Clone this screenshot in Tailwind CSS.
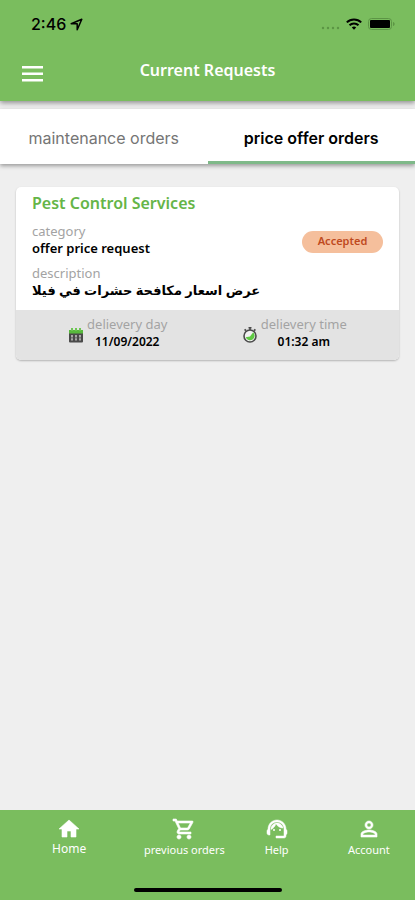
<!DOCTYPE html>
<html lang="en">
<head>
    <meta charset="UTF-8">
    <meta name="viewport" content="width=device-width, initial-scale=1.0">
    <title>Current Requests</title>
    <script src="https://cdn.jsdelivr.net/npm/@tailwindcss/browser@4"></script>
</head>
<body class="min-h-screen flex flex-col bg-[#efefef] font-['Noto_Sans','DejaVu_Sans',sans-serif] text-black">
    <!-- Header -->
    <header class="bg-[#7abd5e] shadow-[0_2px_5px_rgba(0,0,0,0.4)]">
        <!-- Status bar -->
        <div class="h-12 flex justify-between items-center pl-[31px] pr-5">
            <div class="flex items-center gap-1 font-['Inter',sans-serif] text-base font-medium">
                <span>2:46</span>
                <svg class="w-[13px] h-[13px]" viewBox="0 0 13 13" fill="none" stroke="currentColor" stroke-width="1.5" stroke-linejoin="round"><path d="M1.2 5.8 11.8 1.2 7.2 11.8V5.8z"/></svg>
            </div>
            <div class="flex items-center gap-[6px]">
                <svg class="w-[19px] h-3" viewBox="0 0 19 12" fill="#5c9545"><circle cx="2" cy="10" r="1.2"/><circle cx="7" cy="10" r="1.2"/><circle cx="12" cy="10" r="1.2"/><circle cx="17" cy="10" r="1.2"/></svg>
                <svg class="w-4 h-3" viewBox="0 0 16 12" fill="none" stroke="currentColor" stroke-width="2"><path d="M.8 4.4a10.2 10.2 0 0 1 14.4 0M3.5 7.3a6.3 6.3 0 0 1 9 0"/><path d="M8 11.8 5.8 9.6a3.1 3.1 0 0 1 4.4 0z" fill="currentColor" stroke="none"/></svg>
                <svg class="w-[27px] h-3" viewBox="0 0 27 12"><rect x=".5" y=".5" width="23" height="11" rx="3" fill="none" stroke="#5c9545"/><rect x="2" y="2" width="20" height="8" rx="1" fill="#000"/><path d="M25 4v4c1-.4 1.7-1.2 1.7-2S26 4.4 25 4z" fill="#5c9545"/></svg>
            </div>
        </div>
        <div class="h-[53px] grid grid-cols-[1fr_auto_1fr] items-start px-[22px]">
            <button type="button" aria-label="Menu" class="w-[21px] mt-[18px] text-white">
                <svg class="w-[21px] h-4" viewBox="0 0 21 16" fill="currentColor"><path d="M0 0h21v2.5H0zM0 6.5h21V9H0zM0 13h21v2.5H0z"/></svg>
            </button>
            <h1 class="mt-[10px] text-base leading-6 font-semibold text-white">Current Requests</h1>
        </div>
    </header>

    <!-- Tabs -->
    <nav class="mt-2 grid grid-cols-2 bg-white font-['Inter',sans-serif] text-base leading-6 shadow-[0_2px_4px_rgba(0,0,0,0.35)]">
        <a href="#" class="h-[55px] flex items-center justify-center pt-[5px] border-b-3 border-transparent text-[#757575]">maintenance orders</a>
        <a href="#" aria-current="page" class="h-[55px] flex items-center justify-center pt-[5px] border-b-3 border-[#7fb989] font-semibold">price offer orders</a>
    </nav>

    <!-- Requests -->
    <main class="flex-1 px-4 pt-[23px]">
        <article class="rounded-[5px] overflow-hidden bg-white shadow-[0_1px_2px_rgba(0,0,0,0.25)]">
            <div class="h-[123px] px-4 pt-1">
                <h2 class="text-base leading-6 font-semibold text-[#65b548]">Pest Control Services</h2>
                <div class="mt-2 flex justify-between items-start text-[13px] leading-[17px]">
                    <div>
                        <p class="text-[#a3a3a3]">category</p>
                        <p class="font-semibold">offer price request</p>
                    </div>
                    <span class="w-[81px] mt-2 rounded-full bg-[#f5bf9c] pt-[3px] pb-[5px] text-center text-[11px] leading-[14px] font-semibold text-[#bf4a1f]">Accepted</span>
                </div>
                <div class="mt-2 text-[13px] leading-[17px]">
                    <p class="text-[#a3a3a3]">description</p>
                    <p lang="ar" dir="rtl" class="w-fit font-bold">عرض اسعار مكافحة حشرات في فيلا</p>
                </div>
            </div>
            <div class="h-[50px] grid grid-cols-2 pl-[14px] pr-4 pt-[6px] bg-[#e3e3e3] text-[13px] leading-[17px] text-center">
                <div class="flex justify-center gap-1">
                    <svg class="w-[14px] h-[15px] mt-3" viewBox="0 0 14 15"><path d="M0 5h14v8.500a1 1 0 0 1-1 1H1a1 1 0 0 1-1-1z" fill="#4a4a4a"/><path d="M0 2h14v3.500H0z" fill="#58b93d"/><path d="M2 0h2v3H2zM6 0h2v3H6zM10 0h2v3h-2z" fill="#6cc653"/><path d="M2 7h2v5.500H2zM6 7h2v5.500H6zM10 7h2v5.500h-2z" fill="#a8a8a8"/><path d="M1 9.400h12v.8H1z" fill="#4a4a4a"/></svg>
                    <div>
                        <p class="text-[#a3a3a3]">delievery day</p>
                        <p class="text-xs leading-[17px] font-semibold">11/09/2022</p>
                    </div>
                </div>
                <div class="flex justify-center gap-1">
                    <svg class="w-[14px] h-4 mt-[11px]" viewBox="0 0 14 16"><circle cx="7" cy="9" r="6" fill="#f1f1f1" stroke="#4b4b4b" stroke-width="1.6"/><path d="M5.500 0h3v1.500H7.800V3H6.200V1.500h-.7zM1 3l1.200-1.200L3.600 3 2.400 4.200zM13 3l-1.200-1.200L10.400 3l1.200 1.200z" fill="#4b4b4b"/><path d="M7 9.500 10.200 5.300A4.600 4.600 0 1 1 2.700 10.200z" fill="#5fca43"/></svg>
                    <div>
                        <p class="text-[#a3a3a3]">delievery time</p>
                        <p class="text-xs leading-[17px] font-semibold">01:32 am</p>
                    </div>
                </div>
            </div>
        </article>
    </main>

    <!-- Bottom navigation -->
    <footer class="bg-[#7abd5e] text-white">
        <nav class="h-[78px] flex pt-[7px] text-[11px] leading-4 text-center">
            <a href="#" class="flex-[3] flex flex-col items-center text-xs leading-4">
                <svg class="w-6 h-6" viewBox="0 0 24 24" fill="currentColor" stroke="currentColor" stroke-width=".6"><path d="M10 20v-6h4v6h5v-8h3L12 3 2 12h3v8z"/></svg>
                Home
            </a>
            <a href="#" class="flex-[2] flex flex-col items-center gap-px whitespace-nowrap">
                <svg class="w-6 h-6" viewBox="0 0 24 24" fill="currentColor" stroke="currentColor" stroke-width=".6"><path d="M15.55 13c.75 0 1.41-.41 1.75-1.03l3.58-6.49A.996.996 0 0 0 20.01 4H5.21l-.94-2H1v2h2l3.6 7.59-1.35 2.44C4.52 15.37 5.48 17 7 17h12v-2H7l1.1-2h7.45zM6.16 6h12.15l-2.76 5H8.53L6.16 6zM7 18c-1.1 0-1.99.9-1.99 2S5.9 22 7 22s2-.9 2-2-.9-2-2-2zm10 0c-1.1 0-1.99.9-1.99 2s.89 2 1.99 2 2-.9 2-2-.9-2-2-2z"/></svg>
                previous orders
            </a>
            <a href="#" class="flex-[2] flex flex-col items-center gap-px">
                <svg class="w-6 h-6" viewBox="0 0 24 24" fill="currentColor" stroke="currentColor" stroke-width=".5"><path d="M21 12.22C21 6.73 16.74 3 12 3c-4.69 0-9 3.65-9 9.28-.6.34-1 .98-1 1.72v2c0 1.1.9 2 2 2h1v-6.1c0-3.87 3.13-7 7-7s7 3.13 7 7V19h-8v2h8c1.1 0 2-.9 2-2v-1.22c.59-.31 1-.92 1-1.64v-2.3c0-.7-.41-1.31-1-1.62z"/><circle cx="9" cy="13" r="1" stroke="none"/><circle cx="15" cy="13" r="1" stroke="none"/><path d="M18 11.03C17.52 8.18 15.04 6 12.05 6c-3.03 0-6.29 2.51-6.03 6.45 2.47-1.01 4.33-3.21 4.86-5.89 1.31 2.63 4 4.44 7.12 4.47z"/></svg>
                Help
            </a>
            <a href="#" class="flex-[2] flex flex-col items-center gap-px">
                <svg class="w-6 h-6" viewBox="0 0 24 24" fill="currentColor" stroke="currentColor" stroke-width=".6"><path d="M12 5.9a2.1 2.1 0 1 1 0 4.2 2.1 2.1 0 0 1 0-4.2m0 9c2.97 0 6.1 1.46 6.1 2.1v1.1H5.9V17c0-.64 3.13-2.1 6.1-2.1M12 4C9.79 4 8 5.79 8 8s1.79 4 4 4 4-1.79 4-4-1.79-4-4-4zm0 9c-2.67 0-8 1.34-8 4v3h16v-3c0-2.66-5.33-4-8-4z"/></svg>
                Account
            </a>
        </nav>
        <div class="w-[148px] h-1 mx-auto mb-2 rounded-full bg-black"></div>
    </footer>
</body>
</html>
